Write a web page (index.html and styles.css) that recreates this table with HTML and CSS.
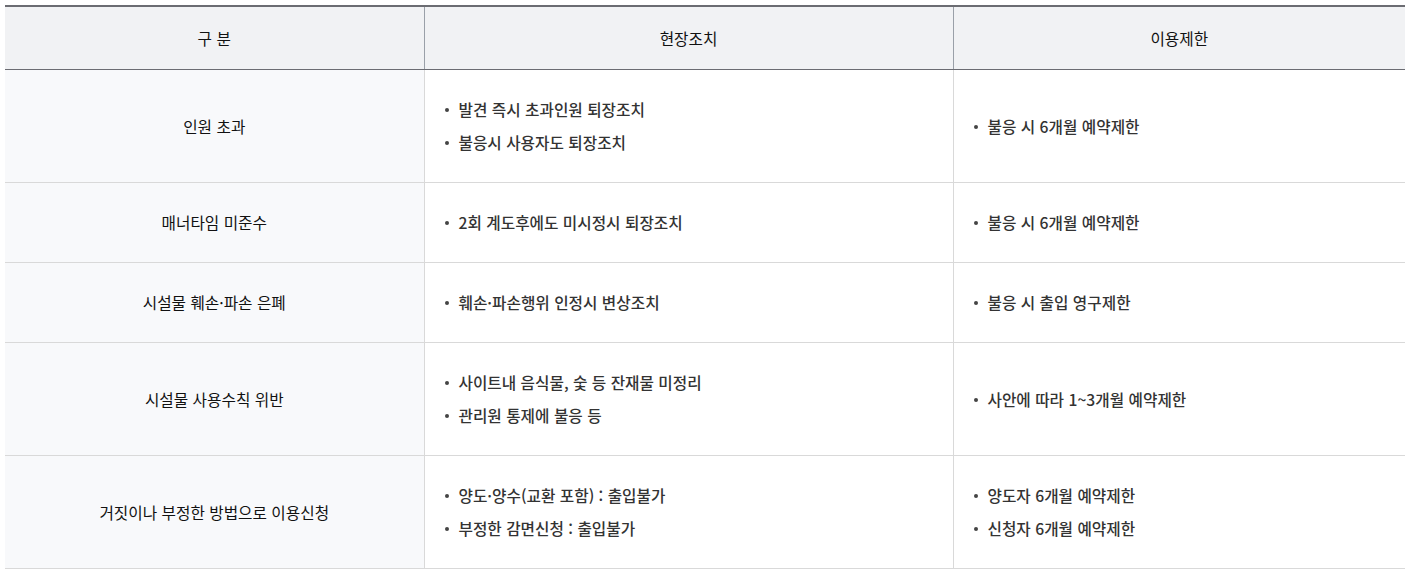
FILE: index.html
```html
<!DOCTYPE html>
<html lang="ko">
<head>
<meta charset="utf-8">
<link rel="stylesheet" href="styles.css">
</head>
<body>
<table class="rules">
  <colgroup>
    <col class="c1">
    <col class="c2">
    <col class="c3">
  </colgroup>
  <thead>
    <tr><th>구 분</th><th>현장조치</th><th>이용제한</th></tr>
  </thead>
  <tbody>
    <tr>
      <td class="cat">인원 초과</td>
      <td><ul><li>발견 즉시 초과인원 퇴장조치</li><li>불응시 사용자도 퇴장조치</li></ul></td>
      <td><ul><li>불응 시 6개월 예약제한</li></ul></td>
    </tr>
    <tr>
      <td class="cat">매너타임 미준수</td>
      <td><ul><li>2회 계도후에도 미시정시 퇴장조치</li></ul></td>
      <td><ul><li>불응 시 6개월 예약제한</li></ul></td>
    </tr>
    <tr>
      <td class="cat">시설물 훼손·파손 은폐</td>
      <td><ul><li>훼손·파손행위 인정시 변상조치</li></ul></td>
      <td><ul><li>불응 시 출입 영구제한</li></ul></td>
    </tr>
    <tr>
      <td class="cat">시설물 사용수칙 위반</td>
      <td><ul><li>사이트내 음식물, 숯 등 잔재물 미정리</li><li>관리원 통제에 불응 등</li></ul></td>
      <td><ul><li>사안에 따라 1~3개월 예약제한</li></ul></td>
    </tr>
    <tr>
      <td class="cat">거짓이나 부정한 방법으로 이용신청</td>
      <td><ul><li>양도·양수(교환 포함) : 출입불가</li><li>부정한 감면신청 : 출입불가</li></ul></td>
      <td><ul><li>양도자 6개월 예약제한</li><li>신청자 6개월 예약제한</li></ul></td>
    </tr>
  </tbody>
</table>
</body>
</html>
```
FILE: styles.css
```css
html, body {
  margin: 0;
  padding: 0;
  background: #fff;
}
body {
  padding: 5px 8px 0 5px;
  font-family: "Noto Sans CJK KR", "Noto Sans", sans-serif;
  font-size: 15.7px;
  color: #111;
}
.rules {
  width: 1400px;
  border-collapse: collapse;
  table-layout: fixed;
  border-top: 2px solid #6b6c72;
}
.c1 { width: 419px; }
.c2 { width: 529px; }
.c3 { width: 452px; }
.rules th {
  background: #f1f2f4;
  font-weight: 400;
  height: 62px;
  padding: 0;
  text-align: center;
  vertical-align: middle;
  border-bottom: 1px solid #6b6c72;
  border-left: 1px solid #9aa0a8;
  color: #111;
}
.rules th:first-child { border-left: none; }
.rules td {
  border-bottom: 1px solid #d9d9d9;
  border-left: 1px solid #d9d9d9;
  padding: 23px 0;
  vertical-align: middle;
}
.rules td:first-child { border-left: none; }
.rules td.cat {
  background: #f8f9fb;
  text-align: center;
  color: #111;
}
.rules ul {
  list-style: none;
  margin: 0;
  padding: 0 0 0 20px;
}
.rules li {
  position: relative;
  line-height: 33px;
  padding-left: 14px;
  color: #333;
  font-weight: 500;
}
.rules li::before {
  content: "";
  position: absolute;
  left: 0;
  top: 15px;
  width: 4px;
  height: 4px;
  border-radius: 50%;
  background: #444;
}
```
